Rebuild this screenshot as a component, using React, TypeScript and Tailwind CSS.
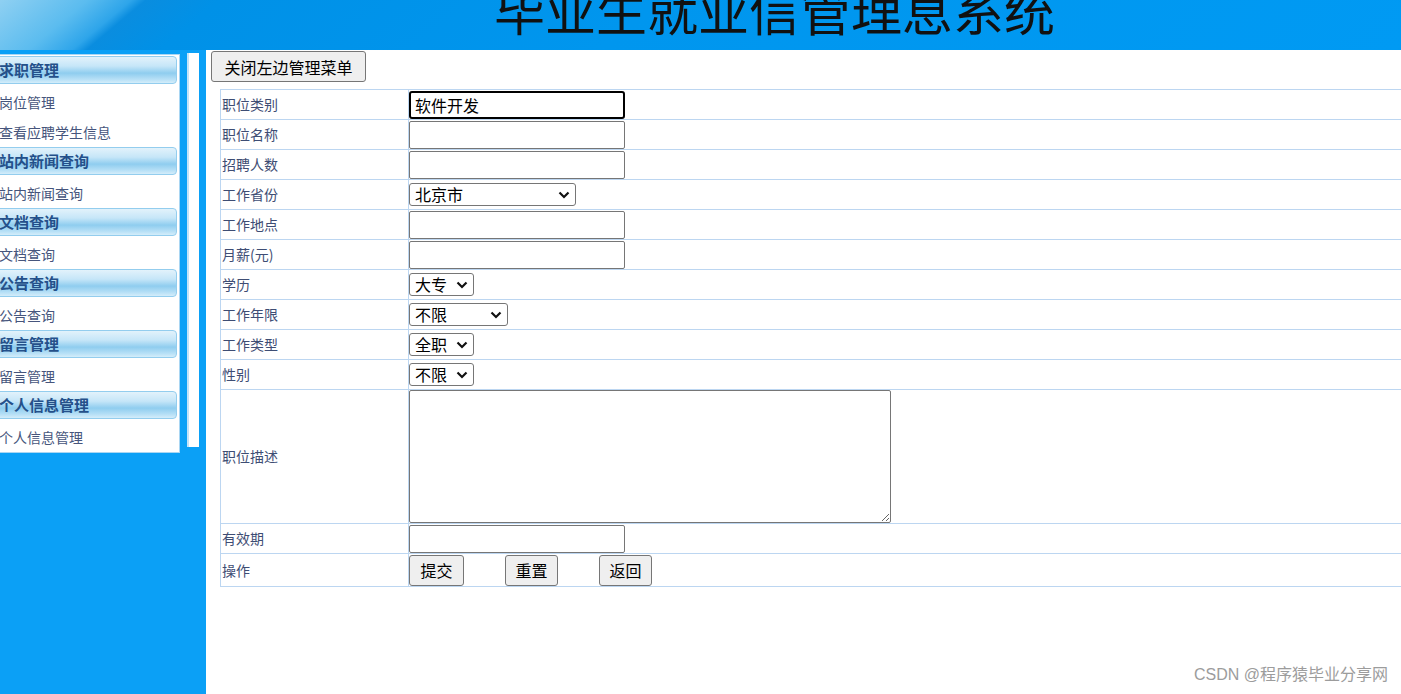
const MENU = [
  { title: "求职管理", items: ["岗位管理", "查看应聘学生信息"] },
  { title: "站内新闻查询", items: ["站内新闻查询"] },
  { title: "文档查询", items: ["文档查询"] },
  { title: "公告查询", items: ["公告查询"] },
  { title: "留言管理", items: ["留言管理"] },
  { title: "个人信息管理", items: ["个人信息管理"] },
];

const btn =
  "h-[31px] border border-[#767676] rounded-[3px] bg-[#efefef] text-[16px] text-black leading-none";
const inputCls =
  "block h-[28px] w-[216px] border border-[#767676] rounded-[2px] bg-white px-[5px] text-[16px] text-black";

function Label({ children }: { children: React.ReactNode }) {
  return (
    <td className="w-[188px] border border-[#bcd6f1] p-0 pl-[1px] align-middle text-[14px] text-[#3e4d74]">
      {children}
    </td>
  );
}

function Cell({ children, h = "h-[29px]", align = "items-end" }: { children: React.ReactNode; h?: string; align?: string }) {
  return (
    <td className="border border-[#bcd6f1] p-0">
      <div className={`flex ${h} ${align}`}>{children}</div>
    </td>
  );
}

function Select({ value, w }: { value: string; w: string }) {
  return (
    <div className={`relative h-[23px] ${w}`}>
      <select
        className="block h-[23px] w-full appearance-none rounded-[3px] border border-[#767676] bg-white pl-[5px] text-[16px] leading-[21px] text-black"
        defaultValue={value}
      >
        <option>{value}</option>
      </select>
      <svg
        className="pointer-events-none absolute right-[6px] top-[8px]"
        width="12"
        height="8"
        viewBox="0 0 12 8"
        fill="none"
      >
        <path d="M1.5 1.5 6 6 10.5 1.5" stroke="#111" strokeWidth="2.2" />
      </svg>
    </div>
  );
}

export default function App() {
  return (
    <div className="relative h-[694px] w-[1401px] overflow-hidden bg-white font-['Noto_Sans_CJK_SC',sans-serif]">
      {/* header */}
      <div className="h-[50px] overflow-hidden bg-[linear-gradient(140deg,#8fd0f2_0%,#5bbcef_6%,#2ea5ea_9%,#0a8ddf_10%,#0091e7_15%,#0096ee_45%,#009af3_100%)]">
        <div className="-mt-[16px] pl-[494px] text-[51px] leading-[51px] text-[#111] whitespace-nowrap">
          毕业生就业信管理息系统
        </div>
      </div>

      <div className="flex h-[644px]">
        {/* left menu panel */}
        <div className="flex w-[206px] shrink-0 items-start bg-[#0ba0f6] pt-[4px]">
          <div className="-ml-[20px] w-[200px] shrink-0 border border-[#a9d6f3] bg-white pt-[1px]">
            {MENU.map((g) => (
              <div key={g.title}>
                <div className="mr-[2px] flex h-[28px] items-center rounded-r-[4px] border border-[#93cdee] bg-[linear-gradient(180deg,#e2f2fb_0%,#c6e6f8_35%,#8fcdef_62%,#b5dff6_85%,#d4edfa_100%)] pl-[17px] text-[15px] font-bold text-[#24508a]">
                  {g.title}
                </div>
                <div className="pt-[3px]">
                  {g.items.map((it) => (
                    <div key={it} className="flex h-[30px] items-center pl-[18px] text-[14px] text-[#46557c]">
                      {it}
                    </div>
                  ))}
                </div>
              </div>
            ))}
          </div>
          <div className="ml-[7px] mt-[-1px] h-[394px] w-[12px] shrink-0 border-l-2 border-[#c4e3f8] bg-white" />
        </div>

        {/* main content */}
        <div className="flex-1 bg-white pl-[5px] pt-[1px]">
          <button className={`${btn} h-[30px] w-[155px]`}>关闭左边管理菜单</button>
          <table className="ml-[9px] mt-[7px] w-[1200px] border-collapse">
            <tbody>
              <tr>
                <Label>职位类别</Label>
                <Cell>
                  <input
                    className="block h-[28px] w-[216px] rounded-[3px] border-2 border-black bg-white px-[4px] text-[16px] text-black"
                    defaultValue="软件开发"
                  />
                </Cell>
              </tr>
              <tr>
                <Label>职位名称</Label>
                <Cell>
                  <input className={inputCls} />
                </Cell>
              </tr>
              <tr>
                <Label>招聘人数</Label>
                <Cell>
                  <input className={inputCls} />
                </Cell>
              </tr>
              <tr>
                <Label>工作省份</Label>
                <Cell align="items-center">
                  <Select value="北京市" w="w-[167px]" />
                </Cell>
              </tr>
              <tr>
                <Label>工作地点</Label>
                <Cell>
                  <input className={inputCls} />
                </Cell>
              </tr>
              <tr>
                <Label>月薪(元)</Label>
                <Cell>
                  <input className={inputCls} />
                </Cell>
              </tr>
              <tr>
                <Label>学历</Label>
                <Cell align="items-center">
                  <Select value="大专" w="w-[65px]" />
                </Cell>
              </tr>
              <tr>
                <Label>工作年限</Label>
                <Cell align="items-center">
                  <Select value="不限" w="w-[99px]" />
                </Cell>
              </tr>
              <tr>
                <Label>工作类型</Label>
                <Cell align="items-center">
                  <Select value="全职" w="w-[65px]" />
                </Cell>
              </tr>
              <tr>
                <Label>性别</Label>
                <Cell align="items-center">
                  <Select value="不限" w="w-[65px]" />
                </Cell>
              </tr>
              <tr>
                <Label>职位描述</Label>
                <Cell h="h-[133px]">
                  <textarea className="block h-[133px] w-[482px] resize rounded-[2px] border border-[#767676] bg-white" />
                </Cell>
              </tr>
              <tr>
                <Label>有效期</Label>
                <Cell>
                  <input className={inputCls} />
                </Cell>
              </tr>
              <tr>
                <Label>操作</Label>
                <Cell h="h-[32px]" align="items-center">
                  <button className={`${btn} w-[55px]`}>提交</button>
                  <button className={`${btn} ml-[41px] w-[53px]`}>重置</button>
                  <button className={`${btn} ml-[41px] w-[53px]`}>返回</button>
                </Cell>
              </tr>
            </tbody>
          </table>
        </div>
      </div>

      <div className="absolute bottom-[7px] right-[13px] font-['Liberation_Sans','Noto_Sans_CJK_SC',sans-serif] text-[16px] text-[#9c9c9c] [text-shadow:0_0_1px_#fff]">
        CSDN @程序猿毕业分享网
      </div>
    </div>
  );
}
